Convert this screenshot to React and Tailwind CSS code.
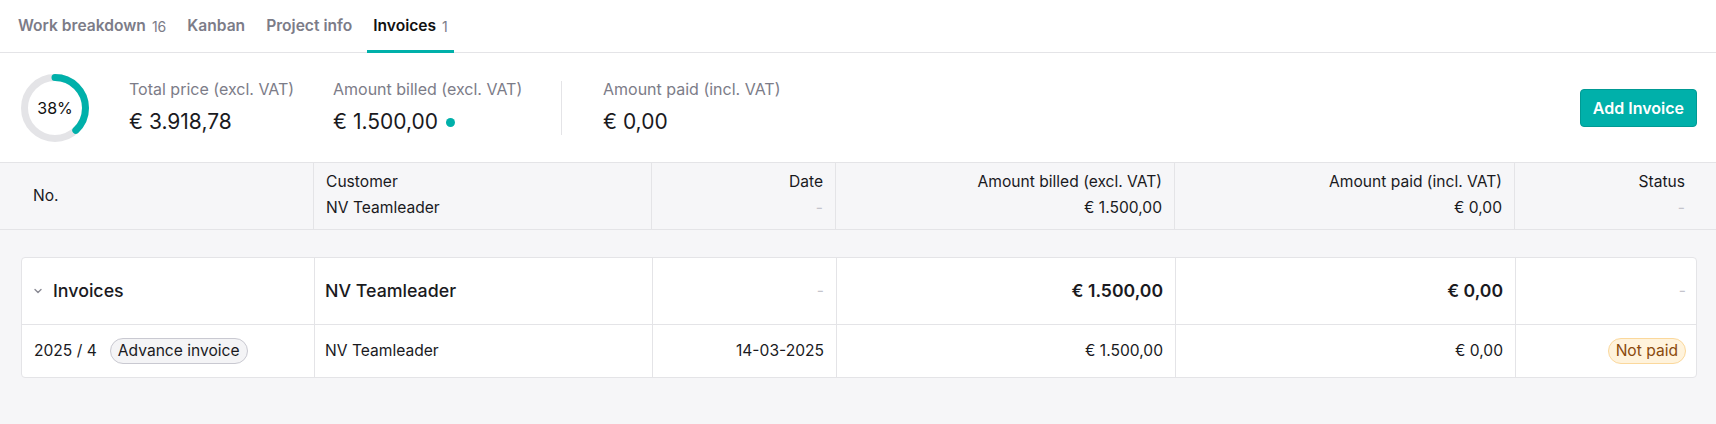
import React from 'react';

const cols = 'grid grid-cols-[292px_339px_184px_339px_340px_182px]';

const Donut = ({ percent }) => {
  const r = 30.5;
  const c = 2 * Math.PI * r;
  return (
    <div className="relative w-[68px] h-[68px]">
      <svg width="68" height="68" viewBox="0 0 68 68">
        <circle cx="34" cy="34" r={r} fill="none" stroke="#e4e4e7" strokeWidth="7" />
        <circle
          cx="34"
          cy="34"
          r={r}
          fill="none"
          stroke="#00b0aa"
          strokeWidth="7"
          strokeLinecap="round"
          strokeDasharray={`${(c * percent) / 100} ${c}`}
          transform="rotate(-90 34 34)"
        />
      </svg>
      <div className="absolute inset-0 flex items-center justify-center text-[16px] text-[#111]">
        {percent}%
      </div>
    </div>
  );
};

const Dash = () => <span className="text-[#c4c4cc]">-</span>;

const App = () => {
  const tabs = [
    { name: 'Work breakdown', count: 16 },
    { name: 'Kanban' },
    { name: 'Project info' },
    { name: 'Invoices', count: 1, active: true },
  ];

  return (
    <div className="min-h-[424px] bg-[#f6f6f8] font-['Inter',sans-serif] text-[#1a1a1e]">
      {/* tabs */}
      <div className="bg-white border-b border-[#e4e4e7] h-[53px] flex items-stretch pl-3 gap-[9px]">
        {tabs.map((t) => (
          <div
            key={t.name}
            className={`flex items-center px-[6px] border-b-[3px] -mb-px pt-[2px] ${
              t.active ? 'border-[#00b0aa] text-[#111]' : 'border-transparent text-[#7c7c88]'
            }`}
          >
            <span className="text-[15.6px] font-semibold">{t.name}</span>
            {t.count && <span className="ml-[6px] text-[14px] text-[#7c7c88]">{t.count}</span>}
          </div>
        ))}
      </div>

      {/* summary */}
      <div className="bg-white h-[109px] flex items-center pl-[21px] pr-[19px]">
        <Donut percent={38} />
        <div className="ml-10 w-[204px]">
          <div className="text-[16px] text-[#7c7c88]">Total price (excl. VAT)</div>
          <div className="mt-[5px] text-[21px]">€ 3.918,78</div>
        </div>
        <div className="w-[228px]">
          <div className="text-[16px] text-[#7c7c88]">Amount billed (excl. VAT)</div>
          <div className="mt-[5px] text-[21px] flex items-center">
            € 1.500,00
            <span className="ml-[8px] w-[9px] h-[9px] rounded-full bg-[#00b0aa]" />
          </div>
        </div>
        <div className="w-px h-[54px] bg-[#e4e4e7]" />
        <div className="ml-[41px]">
          <div className="text-[16px] text-[#7c7c88]">Amount paid (incl. VAT)</div>
          <div className="mt-[5px] text-[21px]">€ 0,00</div>
        </div>
        <button className="ml-auto h-[38px] px-[12px] rounded-[4px] bg-[#00b0aa] border border-[#009a94] text-white text-[16px] font-semibold">
          Add Invoice
        </button>
      </div>

      {/* header row */}
      <div className="border-y border-[#e4e4e7] px-[21px]">
        <div className={`${cols} h-[66px] text-[15.6px]`}>
          <div className="flex items-center px-3">No.</div>
          <div className="border-x border-[#e4e4e7] px-3 pt-[7px]">
            <div>Customer</div>
            <div className="mt-[3px]">NV Teamleader</div>
          </div>
          <div className="border-r border-[#e4e4e7] px-3 pt-[7px] text-right">
            <div>Date</div>
            <div className="mt-[3px]"><Dash /></div>
          </div>
          <div className="border-r border-[#e4e4e7] px-3 pt-[7px] text-right">
            <div>Amount billed (excl. VAT)</div>
            <div className="mt-[3px]">€ 1.500,00</div>
          </div>
          <div className="border-r border-[#e4e4e7] px-3 pt-[7px] text-right">
            <div>Amount paid (incl. VAT)</div>
            <div className="mt-[3px]">€ 0,00</div>
          </div>
          <div className="px-3 pt-[7px] text-right">
            <div>Status</div>
            <div className="mt-[3px]"><Dash /></div>
          </div>
        </div>
      </div>

      {/* invoices card */}
      <div className="px-[21px] pt-[27px]">
        <div className="bg-white border border-[#e4e4e7] rounded-[4px] w-[1676px]">
          <div className={`${cols} h-[67px] border-b border-[#e4e4e7]`}>
            <div className="flex items-center px-3">
              <svg width="8" height="6" viewBox="0 0 8 6" className="mr-[11px]">
                <path d="M1 1.5 L4 4.5 L7 1.5" fill="none" stroke="#8a8a94" strokeWidth="1.4" strokeLinecap="round" strokeLinejoin="round" />
              </svg>
              <span className="text-[17.8px] font-medium">Invoices</span>
            </div>
            <div className="flex items-center px-[10px] border-x border-[#e4e4e7] text-[17.8px] font-medium">
              NV Teamleader
            </div>
            <div className="flex items-center justify-end px-3 border-r border-[#e4e4e7] text-[15.6px]"><Dash /></div>
            <div className="flex items-center justify-end px-3 border-r border-[#e4e4e7] text-[17.6px] font-semibold">€ 1.500,00</div>
            <div className="flex items-center justify-end px-3 border-r border-[#e4e4e7] text-[17.6px] font-semibold">€ 0,00</div>
            <div className="flex items-center justify-end px-3 text-[15.6px]"><Dash /></div>
          </div>
          <div className={`${cols} h-[52px] text-[15.6px]`}>
            <div className="flex items-center px-3">
              <span>2025 / 4</span>
              <span className="ml-[13px] h-[26px] px-[7px] flex items-center rounded-full border border-[#c9c9d1] bg-[#f4f4f6]">
                Advance invoice
              </span>
            </div>
            <div className="flex items-center px-[10px] border-x border-[#e4e4e7]">NV Teamleader</div>
            <div className="flex items-center justify-end px-3 border-r border-[#e4e4e7]">14-03-2025</div>
            <div className="flex items-center justify-end px-3 border-r border-[#e4e4e7]">€ 1.500,00</div>
            <div className="flex items-center justify-end px-3 border-r border-[#e4e4e7]">€ 0,00</div>
            <div className="flex items-center justify-end px-3">
              <span className="h-[26px] px-[7px] flex items-center rounded-full border border-[#fbd89c] bg-[#fff3dc] text-[#8a4a0c]">
                Not paid
              </span>
            </div>
          </div>
        </div>
      </div>
    </div>
  );
};

export default App;
